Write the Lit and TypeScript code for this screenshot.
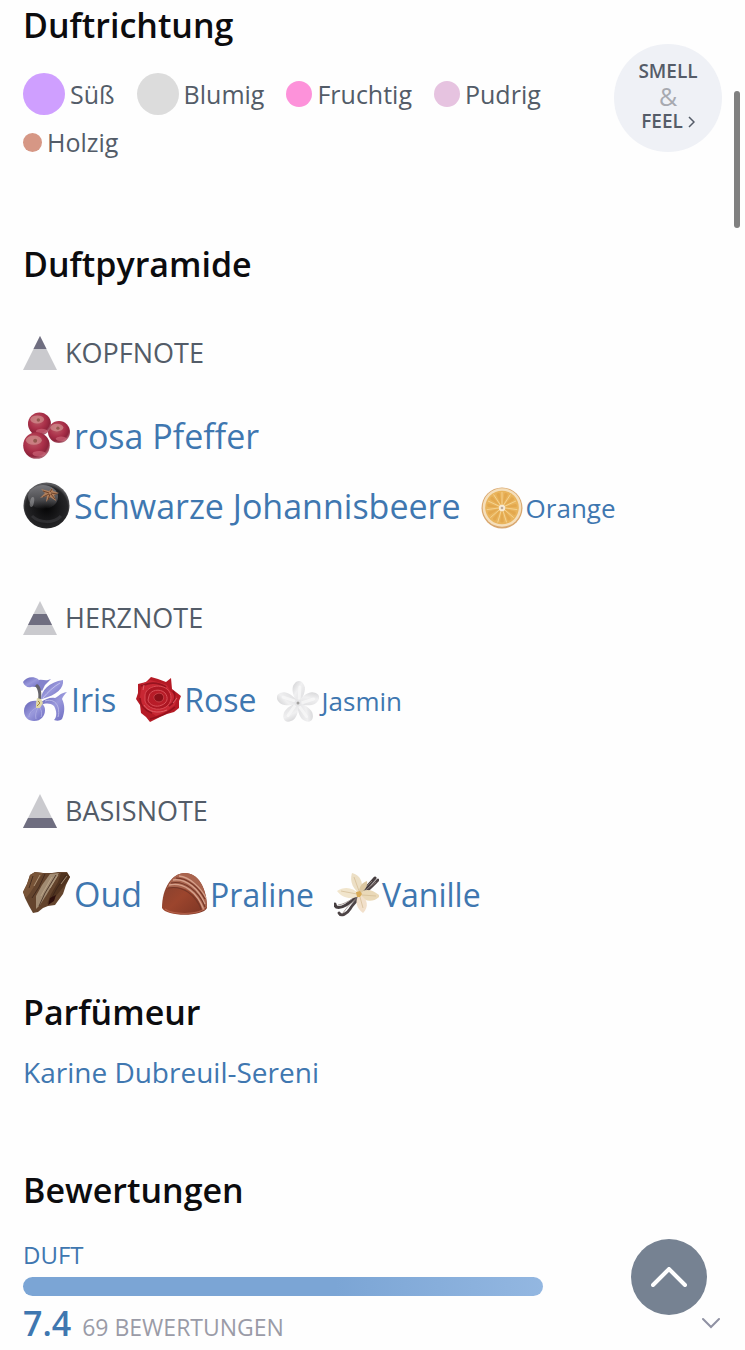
import { css, html, LitElement, svg, TemplateResult } from "lit";
import { customElement } from "lit/decorators.js";
import { styleMap } from "lit/directives/style-map.js";

interface Accord {
  name: string;
  color: string;
  size: number;
}

interface Note {
  name: string;
  size: "large" | "medium" | "small";
  icon: TemplateResult;
}

interface Level {
  name: string;
  // vertical extent of the dark band inside the 34px pyramid
  band: [number, number];
  notes: Note[];
}

const accords: Accord[] = [
  { name: "Süß", color: "#cf9fff", size: 42 },
  { name: "Blumig", color: "#dcdcdc", size: 42 },
  { name: "Fruchtig", color: "#fd92da", size: 26 },
  { name: "Pudrig", color: "#e6c3e0", size: 26 },
  { name: "Holzig", color: "#d69785", size: 19 },
];

const berry = (x: number, y: number, r: number) => svg`
  <circle cx=${x} cy=${y} r=${r} fill="url(#berry)" />
  <ellipse cx=${x - r * 0.2} cy=${y - r * 0.4} rx=${r * 0.6} ry=${r * 0.35} fill="#d69c98" opacity="0.6" />
  <circle cx=${x - r * 0.1} cy=${y - r * 0.35} r=${r * 0.15} fill="#94594f" />
  <ellipse cx=${x + r * 0.2} cy=${y + r * 0.62} rx=${r * 0.5} ry=${r * 0.2} fill="#db7487" opacity="0.55" />
`;

const pinkPepper = svg`
  <defs>
    <radialGradient id="berry" cx="0.4" cy="0.35" r="0.65">
      <stop offset="0" stop-color="#bd5c68" />
      <stop offset="0.55" stop-color="#aa3049" />
      <stop offset="0.85" stop-color="#8e233b" />
      <stop offset="1" stop-color="#ac6070" />
    </radialGradient>
  </defs>
  ${berry(36, 20, 11)}
  ${berry(16.5, 12, 11.5)}
  ${berry(13.5, 33.5, 13.3)}
`;

const blackcurrant = svg`
  <defs>
    <radialGradient id="currant" cx="0.5" cy="0.55" r="0.52">
      <stop offset="0" stop-color="#050506" />
      <stop offset="0.6" stop-color="#1b1b1d" />
      <stop offset="0.88" stop-color="#252527" />
      <stop offset="1" stop-color="#5a5a5d" />
    </radialGradient>
    <linearGradient id="currant-shine" x1="0" y1="0" x2="0" y2="1">
      <stop offset="0" stop-color="#77777b" />
      <stop offset="0.6" stop-color="#66666a" stop-opacity="0.7" />
      <stop offset="1" stop-color="#6a6a6e" stop-opacity="0" />
    </linearGradient>
  </defs>
  <circle cx="23.5" cy="23.5" r="23" fill="url(#currant)" />
  <ellipse cx="20" cy="15" rx="15" ry="12" fill="url(#currant-shine)" />
  <ellipse cx="9" cy="20" rx="2" ry="5" fill="#b5b5b9" opacity="0.45" transform="rotate(12 9 20)" />
  <path d="M9 34c7 7 22 8 29 0" stroke="#444447" stroke-width="3" fill="none" opacity="0.5" />
  <path d="M26 9l-8-2 4 4-5 5 7-2-1 6 4-5 6 4-2-6 5-2-6-2-1-3z" fill="#b07f5c" />
  <path d="M26 11l-6-2M26 12l-6 3M27 12l-2 6M28 12l4 5M28 11l6 1M27 10l2-3" stroke="#6d432a" stroke-width="1" />
`;

const orange = svg`
  <circle cx="21" cy="21" r="20.5" fill="#d9a76e" />
  <circle cx="21" cy="20.5" r="19.3" fill="#f5dfbb" />
  <circle cx="21" cy="20.5" r="16.8" fill="#e9b45c" />
  ${[0, 33, 65, 98, 131, 163, 196, 229, 262, 295, 327].map(
    (a) => svg`
      <path d="M21 18L19.5 7C19.5 5 23 5 23 7z" fill="#dfa044" opacity="0.6" transform="rotate(${a + 16} 21 20.5)" />
      <path d="M21 20.5V5" stroke="#f6d697" stroke-width="0.8" transform="rotate(${a} 21 20.5)" />
    `
  )}
  <circle cx="21" cy="21" r="3.2" fill="#f8ebd5" />
  <circle cx="21" cy="21" r="1.3" fill="#b9a99b" />
`;

const iris = svg`
  <defs>
    <linearGradient id="iris-petal" x1="0" y1="0" x2="1" y2="1">
      <stop offset="0" stop-color="#6261b4" />
      <stop offset="0.5" stop-color="#9a99dc" />
      <stop offset="1" stop-color="#6a69bf" />
    </linearGradient>
  </defs>
  <path d="M0 5C3 0 10-1 15 2c2 2 3 5 2 8-3 1-6-1-9 0-3 1-7-1-8-5z" fill="url(#iris-petal)" />
  <path d="M16 3c3-1 6 1 9 0l3-1-6 6-3 6-3-2z" fill="#8483cc" />
  <path d="M14 7c4 2 5 8 4 17l-3-1c1-6 0-11-3-14z" fill="#65636a" />
  <path d="M18 22c0-8 8-17 22-19 1 8-6 15-21 19z" fill="url(#iris-petal)" />
  <path d="M20 21c5-6 10-11 17-15" stroke="#c3c2ec" fill="none" />
  <path d="M18 25c5-3 9-5 14-4 3-1 5-5 12-6-2 2-4 4-5 7 3 6 3 13 0 20-2 2-5 2-8 1 3-3 3-9 0-14-4-3-8-3-13-1z" fill="url(#iris-petal)" />
  <path d="M22 24c6-2 11 0 13 6 1 4 1 7 0 10" stroke="#b8b7e6" fill="none" />
  <path d="M14 24C6 23 1 28 1 34c0 6 4 10 10 10 7 0 11-5 11-11 0-4-3-8-8-9z" fill="url(#iris-petal)" />
  <path d="M13 31c-4 2-7 5-7 9M15 31c-2 3-3 7-2 11M17 31c2 3 2 7 1 9" stroke="#aaa9e2" fill="none" />
  <path d="M14 21l4 1 2 4-3 5-4 0 0-5z" fill="#e0d8a8" />
  <path d="M15 24l2 2-3 3" stroke="#a78a35" fill="none" />
`;

const rose = svg`
  <path d="M15 0l7 2 8 3 5-4 1 11 9 7-2 5 0 7-5 4-7 2-7 3-10 5-4-5-5-4-1-8-4-6 2-6 0-9 8-2z" fill="#b51a25" />
  <path d="M14 3l8 2 9 3 3 6 7 6-2 8-8 6-11 5-7-5-7-5-2-9 2-13z" fill="#c82733" />
  <path d="M5 9c8-3 15-5 25 1M37 14c4 6 1 12-4 15M4 21c0 7 4 12 12 15M14 42c9-2 18-6 25-12" stroke="#8b0f1a" stroke-width="1.6" fill="none" opacity="0.8" />
  <path d="M9 18c1-8 14-12 22-6 6 5 5 14-1 18-8 5-19 1-21-6z" fill="#ad1723" stroke="#d84a53" />
  <path d="M13 19c1-6 11-8 16-3 4 5 2 10-3 12-6 3-13 0-14-5z" fill="#b81c28" stroke="#d95059" />
  <path d="M18 19c2-3 7-4 9-1 2 4-1 7-4 7s-6-3-5-6z" fill="#8a1019" stroke="#c63e46" />
  <path d="M8 28c4 7 14 9 23 5M7 13l1-5M41 21l-4 5" stroke="#de5e65" fill="none" />
`;

const jasmine = svg`
  <defs>
    <linearGradient id="jasmine-petal" x1="0" y1="0" x2="1" y2="1">
      <stop offset="0" stop-color="#d0d0d2" />
      <stop offset="0.4" stop-color="#f0f0f1" />
      <stop offset="1" stop-color="#dadadc" />
    </linearGradient>
  </defs>
  ${[3, 72, 144, 215, 288].map(
    (a) => svg`
      <g transform="rotate(${a} 21 23)">
        <path d="M21 24C17 19 14 12 15 7c1-3 3-6 6-6s5 3 6 6c1 5-2 12-6 17z" fill="url(#jasmine-petal)" />
        <path d="M22 19V7" stroke="#fafafa" stroke-width="3" stroke-linecap="round" opacity="0.7" />
      </g>
    `
  )}
  <circle cx="21" cy="23" r="3.4" fill="#e6e6e8" />
  <circle cx="21" cy="23" r="1.5" fill="#a2a19f" />
`;

const oud = svg`
  <path d="M12 2l8 1 9 0 6-1 9 0 3 5-4 8-3 9-8 11-7 1-5 2-5 4-5 1-4-7-4-8-2-6 4-8 3-9z" fill="#64442d" />
  <path d="M27 4l9-1-5 9-7 12-7 11-4 4 0-13 6-11z" fill="#a18b72" />
  <path d="M12 2l8 1-6 9-7 11-4 5-3-6 4-8 3-9z" fill="#785438" />
  <path d="M38 3l6 0 3 4-5 8-9 11-9 8 4-10 7-12z" fill="#50331f" />
  <path d="M22 4l-6 13-7 11M33 5L22 23l-6 13M43 5l-9 13-7 13M10 6L6 18" stroke="#38231a" stroke-width="1" fill="none" opacity="0.75" />
  <path d="M29 7L18 26M35 5l-8 13M17 5l-6 11M44 6l-6 8" stroke="#c2ad90" stroke-width="1" fill="none" opacity="0.7" />
  <path d="M27 28l6-3-2 6-6 4z" fill="#2e0f0c" />
`;

const praline = svg`
  <defs>
    <linearGradient id="praline" x1="0" y1="0" x2="1" y2="1">
      <stop offset="0" stop-color="#7f4030" />
      <stop offset="0.5" stop-color="#9c452d" />
      <stop offset="1" stop-color="#7a3424" />
    </linearGradient>
  </defs>
  <path d="M0 36C0 16 10 1 23 1s22 15 22 35c-4 9-41 9-45 0z" fill="url(#praline)" />
  <path d="M5 16C9 6 15 1 23 1c13 0 21 14 22 34l-5 4C38 26 27 12 5 16z" fill="#a9644e" />
  <path d="M7 13c15-3 28 7 35 25M11 8c13-2 26 9 32 24M17 4c11 1 22 12 27 22" stroke="#d6a18c" stroke-width="1.3" fill="none" />
  <path d="M6 16c15-3 28 7 34 23M9 11c13-3 28 8 34 24M14 6c12 0 23 10 29 21" stroke="#743627" stroke-width="1.1" fill="none" />
  <path d="M3 37c8 6 31 6 39 0" stroke="#bd6b52" stroke-width="1.2" fill="none" opacity="0.7" />
`;

const vanilla = svg`
  <path d="M1 32c0 5 6 4 11 1C22 27 29 20 41 6" stroke="#463e40" stroke-width="3" fill="none" stroke-linecap="round" />
  <path d="M5 41c2 4 8 1 11-4 5-9 17-17 28-29" stroke="#4d4446" stroke-width="2.8" fill="none" stroke-linecap="round" />
  <path d="M4 33c10-1 21-11 34-24M9 41c5-8 17-19 33-31" stroke="#948782" stroke-width="0.8" fill="none" />
  <path d="M26 22c-6-4-11-12-8-21 8 2 13 10 8 21z" fill="#ecdfc5" />
  <path d="M25 24C17 28 8 26 3 19c7-5 16-4 22 3z" fill="#f1e5cc" />
  <path d="M25 21c6-5 14-4 21 3-7 7-15 6-21-1z" fill="#ead9b8" />
  <path d="M25 23c-5 6-2 14 4 18 6-6 5-14-3-18z" fill="#f2e0cb" />
  <path d="M25 21c0-7 3-10 8-12 1 5-2 9-7 13z" fill="#dcc8a2" />
  <path d="M20 5l5 14M7 19l16 3M28 23l14 1M26 25l3 11" stroke="#d6bf98" stroke-width="0.8" fill="none" />
  <path d="M22 20l4-1 2 3-2 3-3 0z" fill="#d9ab57" />
`;

const levels: Level[] = [
  {
    name: "Kopfnote",
    band: [0, 13],
    notes: [
      { name: "rosa Pfeffer", size: "large", icon: pinkPepper },
      { name: "Schwarze Johannisbeere", size: "large", icon: blackcurrant },
      { name: "Orange", size: "small", icon: orange },
    ],
  },
  {
    name: "Herznote",
    band: [13, 24],
    notes: [
      { name: "Iris", size: "medium", icon: iris },
      { name: "Rose", size: "medium", icon: rose },
      { name: "Jasmin", size: "small", icon: jasmine },
    ],
  },
  {
    name: "Basisnote",
    band: [24, 34],
    notes: [
      { name: "Oud", size: "large", icon: oud },
      { name: "Praline", size: "medium", icon: praline },
      { name: "Vanille", size: "medium", icon: vanilla },
    ],
  },
];

const iconBox = { large: 47, medium: 45, small: 42 };

@customElement("app-root")
export class AppRoot extends LitElement {
  renderAccord(accord: Accord) {
    const dot = {
      width: `${accord.size}px`,
      height: `${accord.size}px`,
      background: accord.color,
    };
    return html`
      <li class="accord">
        <span class="dot" style=${styleMap(dot)}></span>
        ${accord.name}
      </li>
    `;
  }

  renderLevel(level: Level) {
    const [top, bottom] = level.band;
    const points = [
      [17 - top / 2, top],
      [17 + top / 2, top],
      [17 + bottom / 2, bottom],
      [17 - bottom / 2, bottom],
    ].join(" ");
    return html`
      <section class="level">
        <h3>
          <svg class="pyramid" viewBox="0 0 34 34" aria-hidden="true">
            <polygon points="17,0 34,34 0,34" fill="#cacace" />
            <polygon points=${points} fill="#6f6e80" />
          </svg>
          ${level.name}
        </h3>
        <div class="notes">
          ${level.notes.map(
            (note) => html`
              <a class="note ${note.size}" href="#">
                <svg viewBox="0 0 ${iconBox[note.size]} ${iconBox[note.size]}" aria-hidden="true">
                  ${note.icon}
                </svg>
                ${note.name}
              </a>
            `
          )}
        </div>
      </section>
    `;
  }

  render() {
    return html`
      <main>
        <section class="direction">
          <div class="direction-body">
            <h2>Duftrichtung</h2>
            <ul class="accords">
              ${accords.map((accord) => this.renderAccord(accord))}
            </ul>
          </div>
          <a class="smell-feel" href="#">
            <span>SMELL</span>
            <span class="amp">&amp;</span>
            <span class="feel">
              FEEL
              <svg viewBox="0 0 7 12" width="7" height="12" aria-hidden="true">
                <path d="M1 1l5 5-5 5" fill="none" stroke="currentColor" stroke-width="1.5" />
              </svg>
            </span>
          </a>
        </section>

        <section class="pyramid-section">
          <h2>Duftpyramide</h2>
          ${levels.map((level) => this.renderLevel(level))}
        </section>

        <section class="perfumer">
          <h2>Parfümeur</h2>
          <a href="#">Karine Dubreuil-Sereni</a>
        </section>

        <section class="ratings">
          <h2>Bewertungen</h2>
          <div class="rating-label" id="duft">DUFT</div>
          <div
            class="bar"
            role="meter"
            aria-labelledby="duft"
            aria-valuemin="0"
            aria-valuemax="10"
            aria-valuenow="7.4"
          >
            <div class="fill" style=${styleMap({ width: "74.4%" })}></div>
          </div>
          <div class="score">
            <strong>7.4</strong>
            <span>69 BEWERTUNGEN</span>
            <button class="expand" aria-label="Details anzeigen">
              <svg viewBox="0 0 20 12" width="20" height="12" aria-hidden="true">
                <path d="M1 2l8 8 8-8" fill="none" stroke="currentColor" stroke-width="2" stroke-linecap="round" />
              </svg>
            </button>
          </div>
        </section>
      </main>

      <div class="scroll-thumb"></div>
      <button class="to-top" aria-label="Nach oben">
        <svg viewBox="0 0 36 20" width="36" height="20" aria-hidden="true">
          <path d="M2 18L18 2l16 16" fill="none" stroke="currentColor" stroke-width="4" stroke-linecap="round" />
        </svg>
      </button>
    `;
  }

  static styles = css`
    :host {
      display: block;
      position: relative;
      min-height: 100vh;
      box-sizing: border-box;
      background: #fefefe;
      color: #535c68;
      font-family: "Open Sans", "Noto Sans", sans-serif;
      font-size: 25px;
      line-height: 34px;
    }

    main {
      padding: 2px 23px 0;
    }

    h2,
    h3,
    ul {
      margin: 0;
      padding: 0;
    }

    h2 {
      color: #0c0c0e;
      font-size: 34px;
      font-weight: 600;
      line-height: 46px;
    }

    a {
      color: #3f77b0;
      text-decoration: none;
    }

    button {
      display: flex;
      align-items: center;
      justify-content: center;
      padding: 0;
      border: 0;
      background: none;
      cursor: pointer;
    }

    svg {
      display: block;
      flex: none;
    }

    .direction {
      display: flex;
      align-items: flex-start;
      justify-content: space-between;
      gap: 23px;
    }

    .accords {
      display: flex;
      flex-wrap: wrap;
      align-items: center;
      gap: 10px 22px;
      margin-top: 25px;
      list-style: none;
    }

    .accord {
      display: flex;
      align-items: center;
      gap: 5px;
    }

    .dot {
      flex: none;
      border-radius: 50%;
    }

    .smell-feel {
      display: flex;
      flex: none;
      flex-direction: column;
      align-items: center;
      justify-content: center;
      box-sizing: border-box;
      width: 108px;
      height: 108px;
      margin-top: 42px;
      padding-bottom: 3px;
      border-radius: 50%;
      background: #eff1f6;
      color: #555c68;
      font-size: 19px;
      font-weight: 600;
      line-height: 25px;
    }

    .amp {
      color: #a7a9b0;
      font-size: 25px;
      font-weight: 400;
    }

    .feel {
      display: flex;
      align-items: center;
      gap: 5px;
    }

    .pyramid-section {
      margin-top: 82px;
    }

    .level {
      margin-top: 72px;
    }

    h2 + .level {
      margin-top: 49px;
    }

    h3 {
      display: flex;
      align-items: center;
      gap: 8px;
      font-size: 27px;
      font-weight: 400;
      text-transform: uppercase;
    }

    .pyramid {
      width: 34px;
      height: 34px;
    }

    .notes {
      display: flex;
      flex-wrap: wrap;
      align-items: flex-end;
      gap: 23px 20px;
      margin-top: 42px;
      max-width: 620px;
    }

    .note {
      display: flex;
      align-items: center;
      gap: 3px;
    }

    .large {
      gap: 4px;
      font-size: 34px;
    }

    .large svg {
      width: 47px;
      height: 47px;
    }

    .medium {
      font-size: 32px;
    }

    .medium svg {
      width: 45px;
      height: 45px;
    }

    .small {
      font-size: 26px;
    }

    .small svg {
      width: 42px;
      height: 42px;
    }

    .perfumer {
      margin-top: 72px;
    }

    .perfumer a {
      display: block;
      margin-top: 18px;
      font-size: 28px;
      line-height: 38px;
    }

    .ratings {
      margin-top: 76px;
    }

    .rating-label {
      margin-top: 25px;
      color: #3f77b0;
      font-size: 24px;
    }

    .bar {
      margin-top: 5px;
    }

    .fill {
      height: 19px;
      border-radius: 10px;
      background: linear-gradient(90deg, #7ba5d5 60%, #93b7e1);
    }

    .score {
      display: flex;
      align-items: baseline;
      gap: 11px;
      margin-top: 4px;
      color: #9a9ba7;
      font-size: 23px;
      line-height: 46px;
    }

    .score strong {
      color: #3f77b0;
      font-size: 34px;
      font-weight: 600;
    }

    .expand {
      align-self: center;
      margin-left: auto;
      padding-bottom: 4px;
      color: #8f91a3;
    }

    .scroll-thumb {
      position: absolute;
      top: 91px;
      right: 5px;
      width: 6px;
      height: 137px;
      border-radius: 3px;
      background: #808080;
    }

    .to-top {
      position: fixed;
      right: 38px;
      bottom: 35px;
      width: 76px;
      height: 76px;
      border-radius: 50%;
      background: #768292;
      color: #fff;
    }
  `;
}
